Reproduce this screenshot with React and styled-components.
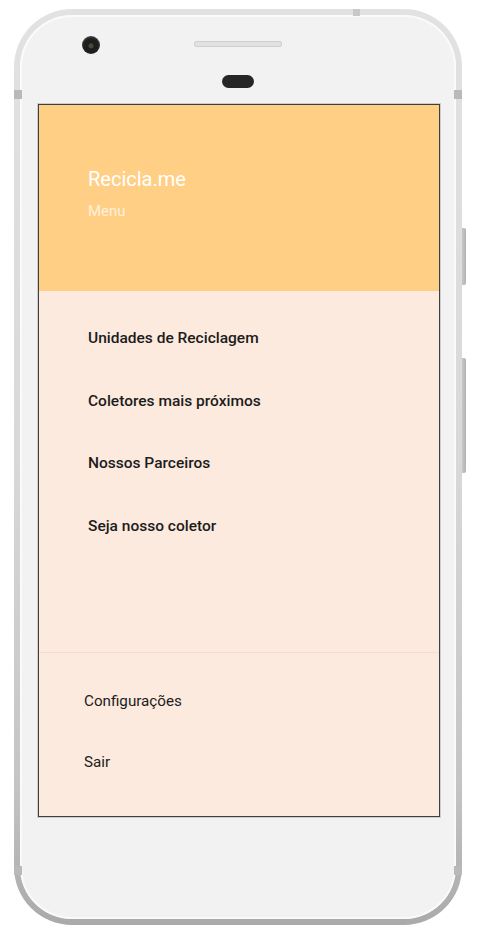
import styled, { createGlobalStyle } from "styled-components";

const GlobalStyle = createGlobalStyle`
  html, body {
    margin: 0;
    padding: 0;
    background: #ffffff;
  }
  body {
    font-family: Roboto, "Liberation Sans", sans-serif;
  }
`;

const Phone = styled.div`
  position: relative;
  box-sizing: border-box;
  width: 448px;
  height: 916px;
  margin: 9px 0 0 14px;
  padding: 6px;
  border-radius: 58px;
  background: linear-gradient(180deg, #e2e2e2 0%, #d8d8d8 50%, #c4c4c4 85%, #aaaaaa 100%);
`;

const SideButton = styled.div`
  position: absolute;
  right: -4px;
  top: ${(p) => p.top}px;
  width: 4px;
  height: ${(p) => p.height}px;
  border-radius: 0 2px 2px 0;
  background: linear-gradient(90deg, #c8c8c8, #b2b2b2);
`;

const Band = styled.div`
  position: absolute;
  top: ${(p) => p.top}px;
  ${(p) => (p.side === "left" ? "left: 0;" : "right: 0;")}
  width: 8px;
  height: 9px;
  background: #b9b9b9;
`;

const TopBand = styled.div`
  position: absolute;
  top: 0;
  left: 339px;
  width: 7px;
  height: 7px;
  background: #c8c8c8;
`;

const Face = styled.div`
  box-sizing: border-box;
  height: 100%;
  border-radius: 52px;
  background: #f2f2f2;
  box-shadow: inset 0 0 0 2px #fafafa;
  display: flex;
  flex-direction: column;
`;

const TopBezel = styled.div`
  position: relative;
  width: 100%;
  height: 89px;
  display: flex;
  flex-direction: column;
  align-items: center;
`;

const Camera = styled.div`
  position: absolute;
  left: 62px;
  top: 21px;
  width: 18px;
  height: 18px;
  border-radius: 50%;
  background: radial-gradient(circle at 50% 55%, #4a4a3a 0 2px, #1e1e1e 3px 7px, #3a3a3a 9px);
`;

const Speaker = styled.div`
  margin-top: 26px;
  width: 88px;
  height: 6px;
  border-radius: 3px;
  background: #e2e2e2;
  box-shadow: inset 0 0 0 1px #cfcfcf;
`;

const Sensor = styled.div`
  margin-top: 28px;
  width: 32px;
  height: 13px;
  border-radius: 7px;
  background: #262626;
`;

const Screen = styled.div`
  box-sizing: border-box;
  width: 402px;
  height: 713px;
  margin-left: 18px;
  border: 1px solid #3f3f3f;
  box-shadow: 0 0 0 1px #cdcdcd;
  background: #fdeade;
  display: flex;
  flex-direction: column;
`;

const Header = styled.header`
  height: 186px;
  flex-shrink: 0;
  box-sizing: border-box;
  padding: 62px 0 0 49px;
  background: #ffcf86;
  display: flex;
  flex-direction: column;
`;

const Title = styled.div`
  font-size: 20px;
  line-height: 24px;
  color: #ffffff;
`;

const Subtitle = styled.div`
  margin-top: 10px;
  font-size: 15px;
  line-height: 20px;
  color: rgba(255, 255, 255, 0.72);
`;

const Nav = styled.nav`
  flex: 1;
  padding-top: 16px;
  display: flex;
  flex-direction: column;
`;

const NavItem = styled.div`
  height: 62.5px;
  flex-shrink: 0;
  padding-left: ${(p) => p.indent}px;
  display: flex;
  align-items: center;
  font-size: ${(p) => (p.bold ? 15.5 : 15.2)}px;
  font-weight: ${(p) => (p.bold ? 500 : 400)};
  color: #1c1c1c;
`;

const Footer = styled.div`
  border-top: 1px solid #f3ddd0;
  padding: 17px 0 24px;
  display: flex;
  flex-direction: column;
`;

const FooterItem = styled(NavItem)`
  height: 61px;
`;

const mainItems = [
  "Unidades de Reciclagem",
  "Coletores mais próximos",
  "Nossos Parceiros",
  "Seja nosso coletor",
];

const footerItems = ["Configurações", "Sair"];

export default function App() {
  return (
    <>
      <GlobalStyle />
      <Phone>
        <TopBand />
        <Band side="left" top={81} />
        <Band side="right" top={81} />
        <Band side="left" top={857} />
        <Band side="right" top={857} />
        <SideButton top={219} height={57} />
        <SideButton top={349} height={115} />
        <Face>
          <TopBezel>
            <Camera />
            <Speaker />
            <Sensor />
          </TopBezel>
          <Screen>
            <Header>
              <Title>Recicla.me</Title>
              <Subtitle>Menu</Subtitle>
            </Header>
            <Nav>
              {mainItems.map((label) => (
                <NavItem key={label} bold indent={49}>
                  {label}
                </NavItem>
              ))}
            </Nav>
            <Footer>
              {footerItems.map((label) => (
                <FooterItem key={label} indent={45}>
                  {label}
                </FooterItem>
              ))}
            </Footer>
          </Screen>
        </Face>
      </Phone>
    </>
  );
}
